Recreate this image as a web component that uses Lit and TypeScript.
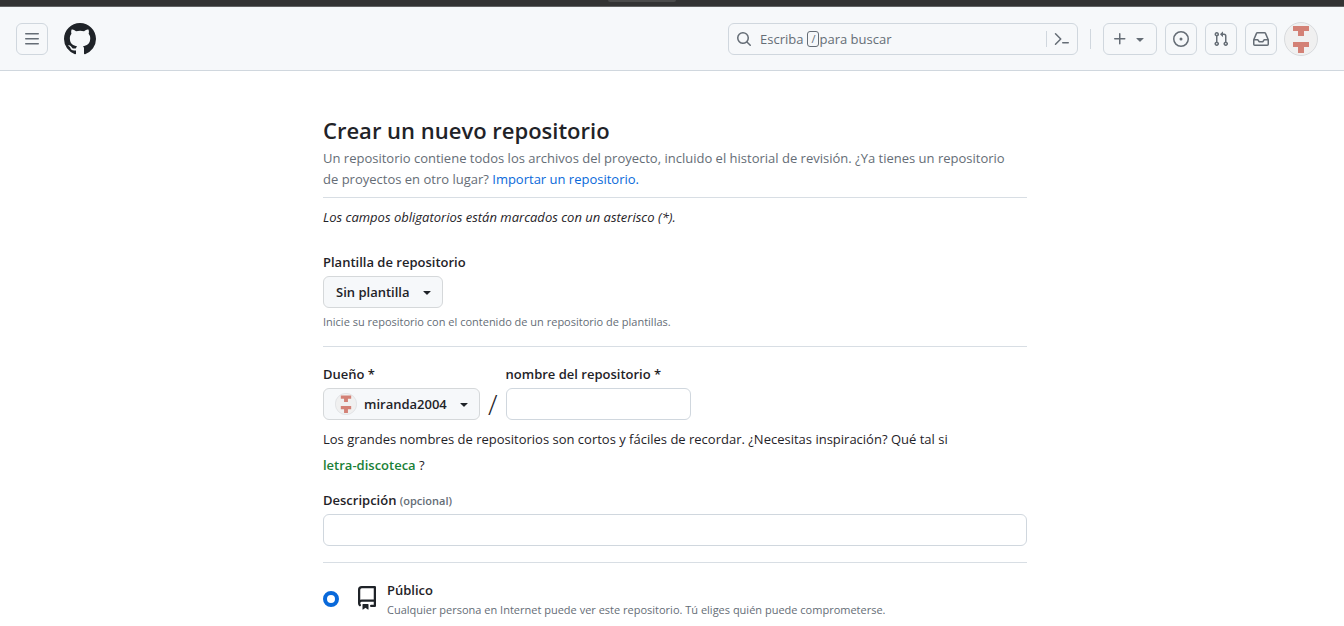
import { LitElement, html, css, svg } from "lit";
import { customElement, property } from "lit/decorators.js";

const icon = (size: number, ...paths: string[]) => html`
  <svg class="icon" width=${size} height=${size} viewBox="0 0 16 16" fill="currentColor" aria-hidden="true">
    ${paths.map((d) => svg`<path d=${d}></path>`)}
  </svg>
`;

const MENU = "M1 2.75A.75.75 0 0 1 1.75 2h12.5a.75.75 0 0 1 0 1.5H1.75A.75.75 0 0 1 1 2.75Zm0 5A.75.75 0 0 1 1.75 7h12.5a.75.75 0 0 1 0 1.5H1.75A.75.75 0 0 1 1 7.75ZM1.75 12h12.5a.75.75 0 0 1 0 1.5H1.75a.75.75 0 0 1 0-1.5Z";
const MARK = "M8 0c4.42 0 8 3.58 8 8a8.013 8.013 0 0 1-5.45 7.59c-.4.08-.55-.17-.55-.38 0-.27.01-1.13.01-2.2 0-.75-.25-1.23-.54-1.48 1.78-.2 3.65-.88 3.65-3.95 0-.88-.31-1.59-.82-2.15.08-.2.36-1.02-.08-2.12 0 0-.67-.22-2.2.82-.64-.18-1.32-.27-2-.27-.68 0-1.36.09-2 .27-1.53-1.03-2.2-.82-2.2-.82-.44 1.1-.16 1.92-.08 2.12-.51.56-.82 1.28-.82 2.15 0 3.06 1.86 3.75 3.64 3.95-.23.2-.44.55-.51 1.07-.46.21-1.61.55-2.33-.66-.15-.24-.6-.83-1.23-.82-.67.01-.27.38.01.53.34.19.73.9.82 1.13.16.45.68 1.31 2.69.94 0 .67.01 1.3.01 1.49 0 .21-.15.45-.55.38A7.995 7.995 0 0 1 0 8c0-4.42 3.58-8 8-8Z";
const SEARCH = "M10.68 11.74a6 6 0 0 1-7.922-8.982 6 6 0 0 1 8.982 7.922l3.04 3.04a.749.749 0 0 1-.326 1.275.749.749 0 0 1-.734-.215ZM11.5 7a4.499 4.499 0 1 0-8.997 0A4.499 4.499 0 0 0 11.5 7Z";
const COMMAND = "M.97 2.22a.75.75 0 0 1 1.06 0L7.28 7.47a.75.75 0 0 1 0 1.06l-5.25 5.25a.75.75 0 0 1-1.06-1.06L5.69 8 .97 3.28a.75.75 0 0 1 0-1.06ZM8.75 11h5.5a.75.75 0 0 1 0 1.5h-5.5a.75.75 0 0 1 0-1.5Z";
const PLUS = "M7.75 2a.75.75 0 0 1 .75.75V7h4.25a.75.75 0 0 1 0 1.5H8.5v4.25a.75.75 0 0 1-1.5 0V8.5H2.75a.75.75 0 0 1 0-1.5H7V2.75A.75.75 0 0 1 7.75 2Z";
const CARET = "m4.427 7.427 3.396 3.396a.25.25 0 0 0 .354 0l3.396-3.396A.25.25 0 0 0 11.396 7H4.604a.25.25 0 0 0-.177.427Z";
const ISSUE = ["M8 9.5a1.5 1.5 0 1 0 0-3 1.5 1.5 0 0 0 0 3Z", "M8 0a8 8 0 1 1 0 16A8 8 0 0 1 8 0ZM1.5 8a6.5 6.5 0 1 0 13 0 6.5 6.5 0 0 0-13 0Z"];
const PULL = "M1.5 3.25a2.25 2.25 0 1 1 3 2.122v5.256a2.251 2.251 0 1 1-1.5 0V5.372A2.25 2.25 0 0 1 1.5 3.25Zm5.677-.177L9.573.677A.25.25 0 0 1 10 .854V2.5h1A2.5 2.5 0 0 1 13.5 5v5.628a2.251 2.251 0 1 1-1.5 0V5a1 1 0 0 0-1-1h-1v1.646a.25.25 0 0 1-.427.177L7.177 3.427a.25.25 0 0 1 0-.354ZM3.75 2.5a.75.75 0 1 0 0 1.5.75.75 0 0 0 0-1.5Zm0 9.5a.75.75 0 1 0 0 1.5.75.75 0 0 0 0-1.5Zm8.25.75a.75.75 0 1 0 1.5 0 .75.75 0 0 0-1.5 0Z";
const INBOX = "M2.8 2.06A1.75 1.75 0 0 1 4.41 1h7.18c.7 0 1.333.417 1.61 1.06l2.74 6.395c.04.093.06.194.06.295v4.5A1.75 1.75 0 0 1 14.25 15H1.75A1.75 1.75 0 0 1 0 13.25v-4.5c0-.101.02-.202.06-.295Zm1.61.44a.25.25 0 0 0-.23.152L1.887 8H4.75a.75.75 0 0 1 .6.3L6.625 10h2.75l1.275-1.7a.75.75 0 0 1 .6-.3h2.863L11.82 2.652a.25.25 0 0 0-.23-.152Zm10.09 7h-2.875l-1.275 1.7a.75.75 0 0 1-.6.3h-3.5a.75.75 0 0 1-.6-.3L4.375 9.5H1.5v3.75c0 .138.112.25.25.25h12.5a.25.25 0 0 0 .25-.25Z";
const REPO = "M2 2.5A2.5 2.5 0 0 1 4.5 0h8.75a.75.75 0 0 1 .75.75v12.5a.75.75 0 0 1-.75.75h-2.5a.75.75 0 0 1 0-1.5h1.75v-2h-8a1 1 0 0 0-.714 1.7.75.75 0 1 1-1.072 1.05A2.495 2.495 0 0 1 2 11.5Zm10.5-1h-8a1 1 0 0 0-1 1v6.708A2.486 2.486 0 0 1 4.5 9h8ZM5 12.25a.25.25 0 0 1 .25-.25h3.5a.25.25 0 0 1 .25.25v3.25a.25.25 0 0 1-.4.2l-1.45-1.087a.249.249 0 0 0-.3 0L5.4 15.7a.25.25 0 0 1-.4-.2Z";

@customElement("user-avatar")
export class UserAvatar extends LitElement {
  @property({ type: Number }) size = 32;

  static styles = css`
    :host {
      display: block;
      line-height: 0;
    }
  `;

  render() {
    return html`
      <svg width=${this.size} height=${this.size} viewBox="0 0 34 34" aria-hidden="true">
        <circle cx="17" cy="17" r="16.5" fill="#f0f0f0" stroke="#d8dadd"></circle>
        <path fill="#d38176" d="M9 4h16v5h-5v5h-6V9H9ZM9 20h16v5h-5v6h-6v-6H9Z"></path>
      </svg>
    `;
  }
}

@customElement("site-header")
export class SiteHeader extends LitElement {
  static styles = css`
    :host {
      display: block;
    }
    * {
      box-sizing: border-box;
    }
    .strip {
      height: 7px;
      background: #333;
      border-bottom: 1px solid #626364;
      display: flex;
      justify-content: center;
    }
    .grip {
      width: 68px;
      height: 2px;
      margin-right: 60px;
      background: #4b4b4b;
      border-radius: 0 0 2px 2px;
    }
    .bar {
      display: flex;
      align-items: center;
      gap: 8px;
      height: 64px;
      padding: 0 26px 0 16px;
      background: #f6f8fa;
      border-bottom: 1px solid #d0d7de;
      color: #656d76;
    }
    .icon {
      display: block;
      flex: none;
    }
    button {
      font: inherit;
      color: inherit;
      background: none;
      padding: 0;
      border: 0;
    }
    .box {
      display: flex;
      align-items: center;
      justify-content: center;
      gap: 4px;
      min-width: 32px;
      height: 32px;
      border: 1px solid #d0d7de;
      border-radius: 6px;
    }
    .create {
      padding: 0 8px;
    }
    .logo {
      margin: 0 auto 0 8px;
      color: #1f2328;
    }
    .search {
      display: flex;
      align-items: center;
      flex: 0 1 350px;
      height: 32px;
      border: 1px solid #d0d7de;
      border-radius: 6px;
    }
    .query {
      display: flex;
      align-items: center;
      flex: 1;
      height: 30px;
      padding-left: 7px;
    }
    .query .icon {
      margin-right: 8px;
    }
    kbd {
      font: inherit;
      font-size: 11px;
      line-height: 14px;
      padding: 0 3px;
      margin-left: 4px;
      border: 1px solid #656d76;
      border-radius: 3px;
    }
    .palette {
      display: flex;
      padding: 0 7px;
      border-left: 1px solid #d0d7de;
    }
    .divider {
      width: 1px;
      height: 20px;
      margin: 0 4px;
      background: #d0d7de;
    }
    .profile {
      margin-left: -1px;
      border-radius: 50%;
    }
  `;

  render() {
    return html`
      <div class="strip"><div class="grip"></div></div>
      <header class="bar">
        <button class="box" aria-label="Abrir menú">${icon(16, MENU)}</button>
        <a class="logo" href="#" aria-label="GitHub">${icon(32, MARK)}</a>
        <div class="search">
          <button class="query">${icon(16, SEARCH)}<span>Escriba</span><kbd>/</kbd><span>para buscar</span></button>
          <button class="palette" aria-label="Paleta de comandos">${icon(16, COMMAND)}</button>
        </div>
        <div class="divider"></div>
        <button class="box create" aria-label="Crear">${icon(16, PLUS)}${icon(16, CARET)}</button>
        <button class="box" aria-label="Incidencias">${icon(16, ...ISSUE)}</button>
        <button class="box" aria-label="Pull requests">${icon(16, PULL)}</button>
        <button class="box" aria-label="Notificaciones">${icon(16, INBOX)}</button>
        <button class="profile" aria-label="Perfil"><user-avatar size="34"></user-avatar></button>
      </header>
    `;
  }
}

@customElement("app-root")
export class AppRoot extends LitElement {
  static styles = css`
    :host {
      display: block;
      height: 100vh;
      overflow: hidden;
      background: #fff;
      color: #1f2328;
      font: 13px/20px "Segoe UI", "Open Sans", "Noto Sans", sans-serif;
    }
    * {
      box-sizing: border-box;
    }
    .icon {
      display: block;
      flex: none;
    }
    main {
      max-width: 710px;
      margin: 0 auto;
      padding: 42px 0 32px 6px;
    }
    h1 {
      margin: 0;
      font-size: 22px;
      line-height: 35px;
      font-weight: 600;
    }
    p {
      margin: 0;
    }
    .lead {
      line-height: 21px;
      color: #656d76;
      padding: 0 8px 7px 0;
      border-bottom: 1px solid #d8dee4;
    }
    a {
      color: #0969da;
      text-decoration: none;
    }
    .required {
      padding-top: 9px;
      font-style: italic;
    }
    .group {
      padding-bottom: 16px;
      border-bottom: 1px solid #d8dee4;
    }
    .template {
      padding-top: 25px;
    }
    .details {
      padding-top: 17px;
    }
    .field {
      display: flex;
      flex-direction: column;
      align-items: flex-start;
      gap: 4px;
    }
    label,
    .title {
      font-weight: 600;
    }
    .note {
      font-size: 11px;
      line-height: 17px;
      font-weight: 400;
      color: #656d76;
    }
    .optional {
      font-size: 11px;
      line-height: 17px;
      color: #656d76;
    }
    .picker {
      display: grid;
      align-items: center;
    }
    .picker > * {
      grid-area: 1 / 1;
    }
    .picker .icon {
      justify-self: end;
      margin-right: 8px;
      pointer-events: none;
    }
    .picker user-avatar {
      justify-self: start;
      margin-left: 12px;
      pointer-events: none;
    }
    select {
      appearance: none;
      height: 32px;
      padding: 0 32px 0 12px;
      font: inherit;
      font-weight: 600;
      color: inherit;
      background: #f6f8fa;
      border: 1px solid #d5d8da;
      border-radius: 6px;
    }
    .owner select {
      padding-left: 40px;
    }
    .hint {
      padding-top: 5px;
    }
    .names {
      display: flex;
      align-items: flex-end;
      gap: 8px;
    }
    .slash {
      font-size: 28px;
      line-height: 32px;
      font-weight: 300;
    }
    input[type="text"] {
      height: 32px;
      width: 100%;
      padding: 0 12px;
      font: inherit;
      color: inherit;
      background: #fff;
      border: 1px solid #d0d7de;
      border-radius: 6px;
    }
    .repo {
      width: 185px;
    }
    .advice {
      padding: 6px 0 12px;
      line-height: 26px;
    }
    .suggestion {
      padding: 0;
      border: 0;
      background: none;
      font: inherit;
      font-weight: 600;
      color: #1a7f37;
    }
    .visibility {
      display: flex;
      align-items: center;
      padding-top: 17px;
    }
    input[type="radio"] {
      appearance: none;
      width: 16px;
      height: 16px;
      margin: 0 16px 0 0;
      border: 1px solid #868c92;
      border-radius: 50%;
    }
    input[type="radio"]:checked {
      border: 4px solid #0969da;
    }
    .visibility label {
      display: flex;
      align-items: flex-start;
      gap: 8px;
    }
    .visibility .icon {
      margin-top: 6px;
    }
    .copy {
      display: grid;
      gap: 1px;
    }
  `;

  render() {
    return html`
      <site-header></site-header>
      <main>
        <h1>Crear un nuevo repositorio</h1>
        <p class="lead">
          Un repositorio contiene todos los archivos del proyecto, incluido el historial de revisión. ¿Ya tienes un
          repositorio de proyectos en otro lugar? <a href="#">Importar un repositorio.</a>
        </p>
        <p class="required">Los campos obligatorios están marcados con un asterisco (*).</p>

        <section class="group template">
          <div class="field">
            <label for="template">Plantilla de repositorio</label>
            <div class="picker">
              <select id="template"><option>Sin plantilla</option></select>
              ${icon(16, CARET)}
            </div>
          </div>
          <p class="hint note">Inicie su repositorio con el contenido de un repositorio de plantillas.</p>
        </section>

        <section class="group details">
          <div class="names">
            <div class="field">
              <label for="owner">Dueño *</label>
              <div class="picker owner">
                <select id="owner"><option>miranda2004</option></select>
                <user-avatar size="22"></user-avatar>
                ${icon(16, CARET)}
              </div>
            </div>
            <span class="slash">/</span>
            <div class="field repo">
              <label for="name">nombre del repositorio *</label>
              <input id="name" type="text" />
            </div>
          </div>
          <p class="advice">
            Los grandes nombres de repositorios son cortos y fáciles de recordar. ¿Necesitas inspiración? Qué tal si
            <button class="suggestion">letra-discoteca</button> ?
          </p>
          <div class="field">
            <label for="description">Descripción <span class="optional">(opcional)</span></label>
            <input id="description" type="text" />
          </div>
        </section>

        <section class="visibility">
          <input id="public" type="radio" name="visibility" checked />
          <label for="public">
            ${icon(24, REPO)}
            <span class="copy">
              <span class="title">Público</span>
              <span class="note">Cualquier persona en Internet puede ver este repositorio. Tú eliges quién puede comprometerse.</span>
            </span>
          </label>
        </section>
      </main>
    `;
  }
}
